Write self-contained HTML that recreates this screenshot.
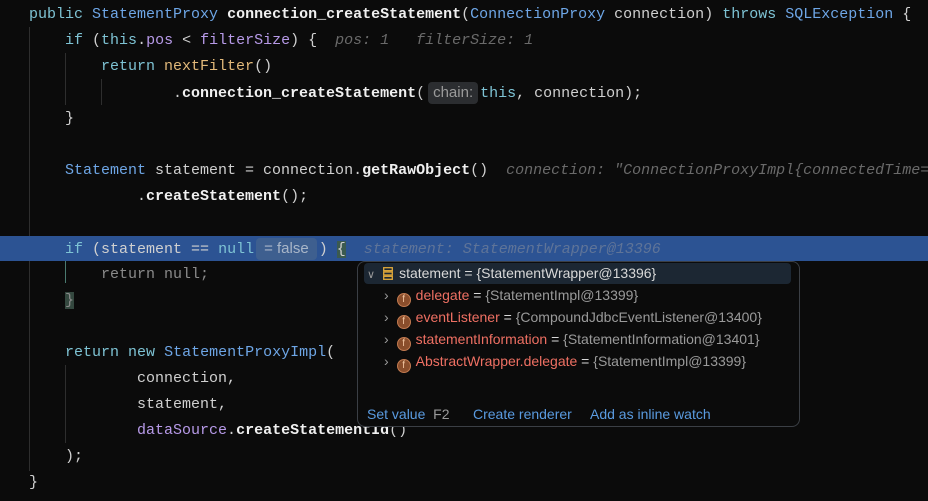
<!DOCTYPE html>
<html><head><meta charset="utf-8"><style>
html,body{margin:0;padding:0;background:#0b0b0b;width:928px;height:501px;overflow:hidden;position:relative}
.l{position:absolute;left:29px;margin-top:5px;height:26px;line-height:26px;font:15px "Liberation Mono",monospace;color:#d0d0d0;white-space:pre}
.k{color:#7ec3d4}.t{color:#6ea6e6}.f{color:#b79ae8}.m{font-weight:bold;color:#f0f0f0}.o{color:#e2b97a}
.h{color:#6a6a6a;font-style:italic}
.pill{font:15px "Liberation Sans",sans-serif;border-radius:4px;padding:2px 6px 3px;font-style:normal}
.g{position:absolute;width:1px;background:#2e2e2e}
.pop{position:absolute;left:357px;top:261px;width:443px;height:166px;background:#0b0b0b;border:1px solid #3b3f45;border-radius:8px;box-sizing:border-box;font:14px "Liberation Sans",sans-serif}
.r{position:absolute;left:0;height:22px;line-height:22px;white-space:nowrap;color:#d8d8d8}
.fi{display:inline-block;width:14px;height:14px;border-radius:50%;background:#8a4e2c;border:1px solid #c27a50;color:#f2c5a0;font-size:10px;line-height:12px;text-align:center;vertical-align:-2px;margin-right:5px;box-sizing:border-box}
.n{color:#ef7063}.v{color:#9a9a9a}
.a{color:#5a9be0}
</style></head><body>
<div class="g" style="left:29px;top:27px;height:444px"></div>
<div class="g" style="left:65px;top:53px;height:52px"></div>
<div class="g" style="left:101px;top:79px;height:26px"></div>
<div class="g" style="left:65px;top:261px;height:22px;background:#4a7a70"></div>
<div class="g" style="left:65px;top:365px;height:78px"></div>
<div style="position:absolute;left:0;top:236px;width:928px;height:25px;background:#2c5393"></div>

<div class="l" style="top:1px"><span class="k">public</span> <span class="t">StatementProxy</span> <span class="m">connection_createStatement</span>(<span class="t">ConnectionProxy</span> connection) <span class="k">throws</span> <span class="t">SQLException</span> {</div>
<div class="l" style="top:27px">    <span class="k">if</span> (<span class="k">this</span>.<span class="f">pos</span> &lt; <span class="f">filterSize</span>) {  <span class="h">pos: 1   filterSize: 1</span></div>
<div class="l" style="top:53px">        <span class="k">return</span> <span class="o">nextFilter</span>()</div>
<div class="l" style="top:79px">                .<span class="m">connection_createStatement</span>( <span class="pill" style="background:#2b2d30;color:#9a9a9a;margin-left:-6px;margin-right:2px;padding:2px 5px 3px">chain:</span><span class="k">this</span>, connection);</div>
<div class="l" style="top:105px">    }</div>
<div class="l" style="top:157px">    <span class="t">Statement</span> statement = connection.<span class="m">getRawObject</span>()  <span class="h">connection: "ConnectionProxyImpl{connectedTime=</span></div>
<div class="l" style="top:183px">            .<span class="m">createStatement</span>();</div>
<div class="l" style="top:235px">    <span class="k">if</span> (statement == <span class="k">null</span><span class="pill" style="background:#3e5f8f;color:#a9b6c8;margin-left:2px;margin-right:2px;padding:2px 8px 3px">= false</span>) <span style="background:#3b5a50">{</span>  <span class="h" style="color:#5f7498">statement: StatementWrapper@13396</span></div>
<div class="l" style="top:261px;color:#8a8a8a">        return null;</div>
<div class="l" style="top:287px">    <span style="background:#34483f;color:#8a8a8a">}</span></div>
<div class="l" style="top:339px">    <span class="k">return</span> <span class="k">new</span> <span class="t">StatementProxyImpl</span>(</div>
<div class="l" style="top:365px">            connection,</div>
<div class="l" style="top:391px">            statement,</div>
<div class="l" style="top:417px">            <span class="f">dataSource</span>.<span class="m">createStatementId</span>()</div>
<div class="l" style="top:443px">    );</div>
<div class="l" style="top:469px">}</div>

<div class="pop">
 <div style="position:absolute;left:6px;top:1px;width:427px;height:21px;background:#1c2733;border-radius:4px"></div>
 <div class="r" style="top:0px;left:6px"><span style="color:#999;font-size:11px;margin:0 8px 0 3px">&#8744;</span><svg width="10" height="13" viewBox="0 0 10 13" style="vertical-align:-2px;margin-right:6px"><g fill="none" stroke="#e0a93a" stroke-width="1.3"><rect x="0.7" y="0.7" width="8.6" height="3"/><rect x="0.7" y="5" width="8.6" height="3"/><rect x="0.7" y="9.3" width="8.6" height="3"/></g></svg>statement = {StatementWrapper@13396}</div>
 <div class="r" style="top:22px;left:26px"><span class="v" style="margin-right:8px">&#8250;</span><span class="fi">f</span><span class="n">delegate</span> = <span class="v">{StatementImpl@13399}</span></div>
 <div class="r" style="top:44px;left:26px"><span class="v" style="margin-right:8px">&#8250;</span><span class="fi">f</span><span class="n">eventListener</span> = <span class="v">{CompoundJdbcEventListener@13400}</span></div>
 <div class="r" style="top:66px;left:26px"><span class="v" style="margin-right:8px">&#8250;</span><span class="fi">f</span><span class="n">statementInformation</span> = <span class="v">{StatementInformation@13401}</span></div>
 <div class="r" style="top:88px;left:26px"><span class="v" style="margin-right:8px">&#8250;</span><span class="fi">f</span><span class="n">AbstractWrapper.delegate</span> = <span class="v">{StatementImpl@13399}</span></div>
 <div class="r" style="top:141px;left:9px"><span class="a">Set value</span>&nbsp;&nbsp;<span class="v">F2</span></div>
 <div class="r" style="top:141px;left:115px"><span class="a">Create renderer</span></div>
 <div class="r" style="top:141px;left:232px"><span class="a">Add as inline watch</span></div>
</div>
</body></html>
